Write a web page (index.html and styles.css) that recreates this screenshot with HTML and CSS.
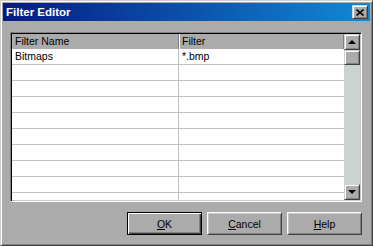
FILE: index.html
```html
<!DOCTYPE html>
<html lang="en">
<head>
    <meta charset="UTF-8">
    <title>Filter Editor</title>
    <link rel="stylesheet" href="styles.css">
</head>
<body>
    <div class="window">
        <div class="titlebar">
            <span class="title">Filter Editor</span>
            <div class="close">
                <svg width="8" height="7" viewBox="0 0 8 7"><path d="M0.5 0.5L7.5 6.5M7.5 0.5L0.5 6.5" stroke="#000" stroke-width="1.6" fill="none"/></svg>
            </div>
        </div>
        <div class="client">
            <div class="listbox">
                <div class="rows">
                    <div class="row head">
                        <div class="cell">Filter Name</div>
                        <div class="cell">Filter</div>
                    </div>
                    <div class="row"><div class="cell">Bitmaps</div><div class="cell">*.bmp</div></div>
                    <div class="row"><div class="cell"></div><div class="cell"></div></div>
                    <div class="row"><div class="cell"></div><div class="cell"></div></div>
                    <div class="row"><div class="cell"></div><div class="cell"></div></div>
                    <div class="row"><div class="cell"></div><div class="cell"></div></div>
                    <div class="row"><div class="cell"></div><div class="cell"></div></div>
                    <div class="row"><div class="cell"></div><div class="cell"></div></div>
                    <div class="row"><div class="cell"></div><div class="cell"></div></div>
                    <div class="row"><div class="cell"></div><div class="cell"></div></div>
                    <div class="row"><div class="cell"></div><div class="cell"></div></div>
                </div>
                <div class="scrollbar">
                    <div class="sb-btn"><span class="arrow-up"></span></div>
                    <div class="thumb"></div>
                    <div class="track"></div>
                    <div class="sb-btn"><span class="arrow-down"></span></div>
                </div>
            </div>
            <div class="buttons">
                <div class="btn default"><u>O</u>K</div>
                <div class="btn"><u>C</u>ancel</div>
                <div class="btn"><u>H</u>elp</div>
            </div>
        </div>
    </div>
</body>
</html>
```

FILE: styles.css
```css
body{margin: 0;font-family: "Liberation Sans", Arial, sans-serif;font-size: 10.5px;color: #000;}
.window{width: 373px;height: 246px;box-sizing: border-box;background: #ababab;border: 1px solid;border-color: #d4d0c8 #404040 #404040 #d4d0c8;box-shadow: inset 1px 1px #fff, inset -1px -1px #808080;padding: 2px;display: flex;flex-direction: column;}
.titlebar{height: 18px;display: flex;align-items: center;justify-content: space-between;padding: 0 2px 0 3px;background: linear-gradient(90deg, #061a82, #1188d4);}
.title{color: #fff;font-weight: bold;font-size: 11.5px;}
.close{width: 16px;height: 14px;box-sizing: border-box;display: flex;align-items: center;justify-content: center;background: #ababab;border: 1px solid;border-color: #d4d0c8 #404040 #404040 #d4d0c8;box-shadow: inset 1px 1px #fff, inset -1px -1px #808080;}
.client{flex: 1;padding: 11px 8px 0 7px;display: flex;flex-direction: column;}
.listbox{height: 170px;box-sizing: border-box;display: flex;border: 1px solid;border-color: #808080 #fff #fff #808080;box-shadow: inset 1px 1px #000, inset -1px -1px #c8c8c8;padding: 1px;}
.rows{flex: 1;background: #fff;overflow: hidden;}
.row{display: grid;grid-template-columns: 167px 1fr;height: 16px;box-sizing: border-box;border-bottom: 1px solid #c0c0c0;line-height: 15px;}
.row .cell{padding-left: 3px;white-space: nowrap;}
.row .cell:first-child{border-right: 1px solid #c0c0c0;}
.row.head{height: 15px;border-bottom: none;background: #ababab;line-height: 14px;}
.row.head .cell:first-child{border-right-color: #808080;}
.row.head .cell:last-child{box-shadow: inset 1px 0 #fff, inset -1px 0 #808080;}
.scrollbar{width: 16px;display: flex;flex-direction: column;background: #cbd3d0;}
.sb-btn{height: 16px;box-sizing: border-box;display: flex;align-items: center;justify-content: center;background: #ababab;border: 1px solid;border-color: #d4d0c8 #404040 #404040 #d4d0c8;box-shadow: inset 1px 1px #fff, inset -1px -1px #808080;}
.thumb{height: 15px;box-sizing: border-box;background: #ababab;border: 1px solid;border-color: #d4d0c8 #404040 #404040 #d4d0c8;box-shadow: inset 1px 1px #fff, inset -1px -1px #808080;}
.track{flex: 1;}
.arrow-up{width: 0;height: 0;border-left: 4px solid transparent;border-right: 4px solid transparent;border-bottom: 4px solid #000;}
.arrow-down{width: 0;height: 0;border-left: 4px solid transparent;border-right: 4px solid transparent;border-top: 4px solid #000;}
.buttons{display: flex;justify-content: flex-end;gap: 5px;margin-top: 10px;}
.btn{width: 75px;height: 23px;box-sizing: border-box;display: flex;align-items: center;justify-content: center;background: #ababab;border: 1px solid;border-color: #fff #404040 #404040 #fff;box-shadow: inset 1px 1px #c8c8c8, inset -1px -1px #808080;}
.btn.default{border-color: #000;box-shadow: inset 1px 1px #fff, inset -1px -1px #404040, inset -2px -2px #808080;}
```
